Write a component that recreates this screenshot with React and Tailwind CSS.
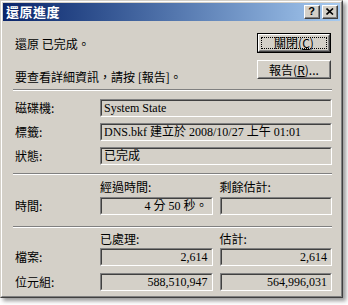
import React from "react";

const font = "font-['Noto_Sans_CJK_TC','Liberation_Sans',sans-serif]";
const serif = "font-['Liberation_Serif','Noto_Sans_CJK_TC',serif]";

function Etch() {
  return <div className="h-[2px] border-t border-t-[#808080] border-b border-b-white" />;
}

function Field({ children, right }) {
  return (
    <div className="h-[18px] border border-t-[#808080] border-l-[#808080] border-b-white border-r-white">
      <div
        className={
          right
            ? "h-full border border-t-[#404040] border-l-[#404040] border-b-[#d4d0c8] border-r-[#d4d0c8] flex items-center justify-end pr-[3px] text-[12px] leading-[14px] text-black " + serif
            : "h-full border border-t-[#404040] border-l-[#404040] border-b-[#d4d0c8] border-r-[#d4d0c8] flex items-center pl-[2px] text-[12px] leading-[14px] text-black " + serif
        }
      >
        {children}
      </div>
    </div>
  );
}

function Btn({ children, isDefault }) {
  if (isDefault) {
    return (
      <div className="h-[20px] border border-black">
        <div className="h-full border border-t-white border-l-white border-b-[#404040] border-r-[#404040]">
          <div className="h-full border border-t-[#d4d0c8] border-l-[#d4d0c8] border-b-[#808080] border-r-[#808080] p-[1px]">
            <div className="h-full border border-dotted border-black flex items-center justify-center text-[12px] leading-[12px]">
              {children}
            </div>
          </div>
        </div>
      </div>
    );
  }
  return (
    <div className="h-[19px] border border-t-white border-l-white border-b-[#404040] border-r-[#404040]">
      <div className="h-full border border-t-[#d4d0c8] border-l-[#d4d0c8] border-b-[#808080] border-r-[#808080] flex items-center justify-center text-[12px] leading-[12px]">
        {children}
      </div>
    </div>
  );
}

function CapBtn({ children }) {
  return (
    <div className="w-[16px] h-[14px] bg-[#d4d0c8] border border-t-white border-l-white border-b-[#404040] border-r-[#404040]">
      <div className="h-full border-b border-r border-b-[#808080] border-r-[#808080] flex items-center justify-center">
        {children}
      </div>
    </div>
  );
}

function Label({ children }) {
  return <div className="w-[85px] text-[12px] leading-[14px] text-black">{children}</div>;
}

export default function App() {
  return (
    <div className={"w-[348px] h-[305px] bg-white " + font}>
      <div className="w-[343px] h-[298px] bg-[#d4d0c8] border border-t-[#d4d0c8] border-l-[#d4d0c8] border-b-[#404040] border-r-[#404040] shadow-[3px_3px_4px_rgba(0,0,0,0.4)]">
        <div className="h-full border border-t-white border-l-white border-b-[#808080] border-r-[#808080] p-[1px] flex flex-col">
          {/* title bar */}
          <div className="h-[18px] bg-gradient-to-r from-[#0a246a] to-[#a6caf0] flex items-center pl-[3px] pr-[2px]">
            <div className="text-white font-bold text-[13px] leading-[14px] tracking-[0.5px]">還原進度</div>
            <div className="ml-auto flex gap-[2px]">
              <CapBtn>
                <span className="text-[11px] leading-[11px] font-bold text-black font-['Liberation_Sans',sans-serif]">?</span>
              </CapBtn>
              <CapBtn>
                <svg width="8" height="7" viewBox="0 0 8 7">
                  <path d="M0.5 0.5 L7 6.5 M7 0.5 L0.5 6.5" stroke="#000" strokeWidth="1.6" />
                </svg>
              </CapBtn>
            </div>
          </div>

          <div className="pl-[10px] pr-[8px] flex flex-col">
            {/* top */}
            <div className="flex h-[68px]">
              <div className="flex-1 pl-[2px]">
                <div className="mt-[16px] text-[12px] leading-[14px]">還原 已完成。</div>
                <div className="mt-[19px] text-[12px] leading-[14px]">要查看詳細資訊，請按 [報告]。</div>
              </div>
              <div className="w-[74px] mr-[1px]">
                <div className="mt-[12px]">
                  <Btn isDefault>
                    關閉(<span className="underline">C</span>)
                  </Btn>
                </div>
                <div className="mt-[7px]">
                  <Btn>
                    報告(<span className="underline">R</span>)...
                  </Btn>
                </div>
              </div>
            </div>

            <Etch />

            {/* info fields */}
            <div className="mt-[8px] flex flex-col gap-[6px] pl-[2px]">
              <div className="flex items-center">
                <Label>磁碟機:</Label>
                <div className="flex-1">
                  <Field>System State</Field>
                </div>
              </div>
              <div className="flex items-center">
                <Label>標籤:</Label>
                <div className="flex-1">
                  <Field>DNS.bkf 建立於 2008/10/27 上午 01:01</Field>
                </div>
              </div>
              <div className="flex items-center">
                <Label>狀態:</Label>
                <div className="flex-1">
                  <Field>已完成</Field>
                </div>
              </div>
            </div>

            <div className="mt-[8px]">
              <Etch />
            </div>

            {/* time */}
            <div className="flex pl-[2px] mt-[4px]">
              <div className="w-[85px] flex flex-col">
                <div className="h-[18px]" />
                <div className="h-[18px] flex items-center text-[12px] leading-[14px]">時間:</div>
              </div>
              <div className="flex-1 grid grid-cols-2 gap-x-[7px]">
                <div className="text-[12px] leading-[14px] h-[18px] pt-[1px]">經過時間:</div>
                <div className="text-[12px] leading-[14px] h-[18px] pt-[1px]">剩餘估計:</div>
                <Field right>4 分 50 秒。</Field>
                <Field right></Field>
              </div>
            </div>

            <div className="mt-[11px]">
              <Etch />
            </div>

            {/* counts */}
            <div className="flex pl-[2px] mt-[4px]">
              <div className="w-[85px] flex flex-col">
                <div className="h-[16px]" />
                <div className="h-[18px] flex items-center text-[12px] leading-[14px]">檔案:</div>
                <div className="h-[7px]" />
                <div className="h-[18px] flex items-center text-[12px] leading-[14px]">位元組:</div>
              </div>
              <div className="flex-1 grid grid-cols-2 gap-x-[7px]">
                <div className="text-[12px] leading-[14px] h-[16px]">已處理:</div>
                <div className="text-[12px] leading-[14px] h-[16px]">估計:</div>
                <Field right>2,614</Field>
                <Field right>2,614</Field>
                <div className="h-[7px] col-span-2" />
                <Field right>588,510,947</Field>
                <Field right>564,996,031</Field>
              </div>
            </div>
          </div>
        </div>
      </div>
    </div>
  );
}
